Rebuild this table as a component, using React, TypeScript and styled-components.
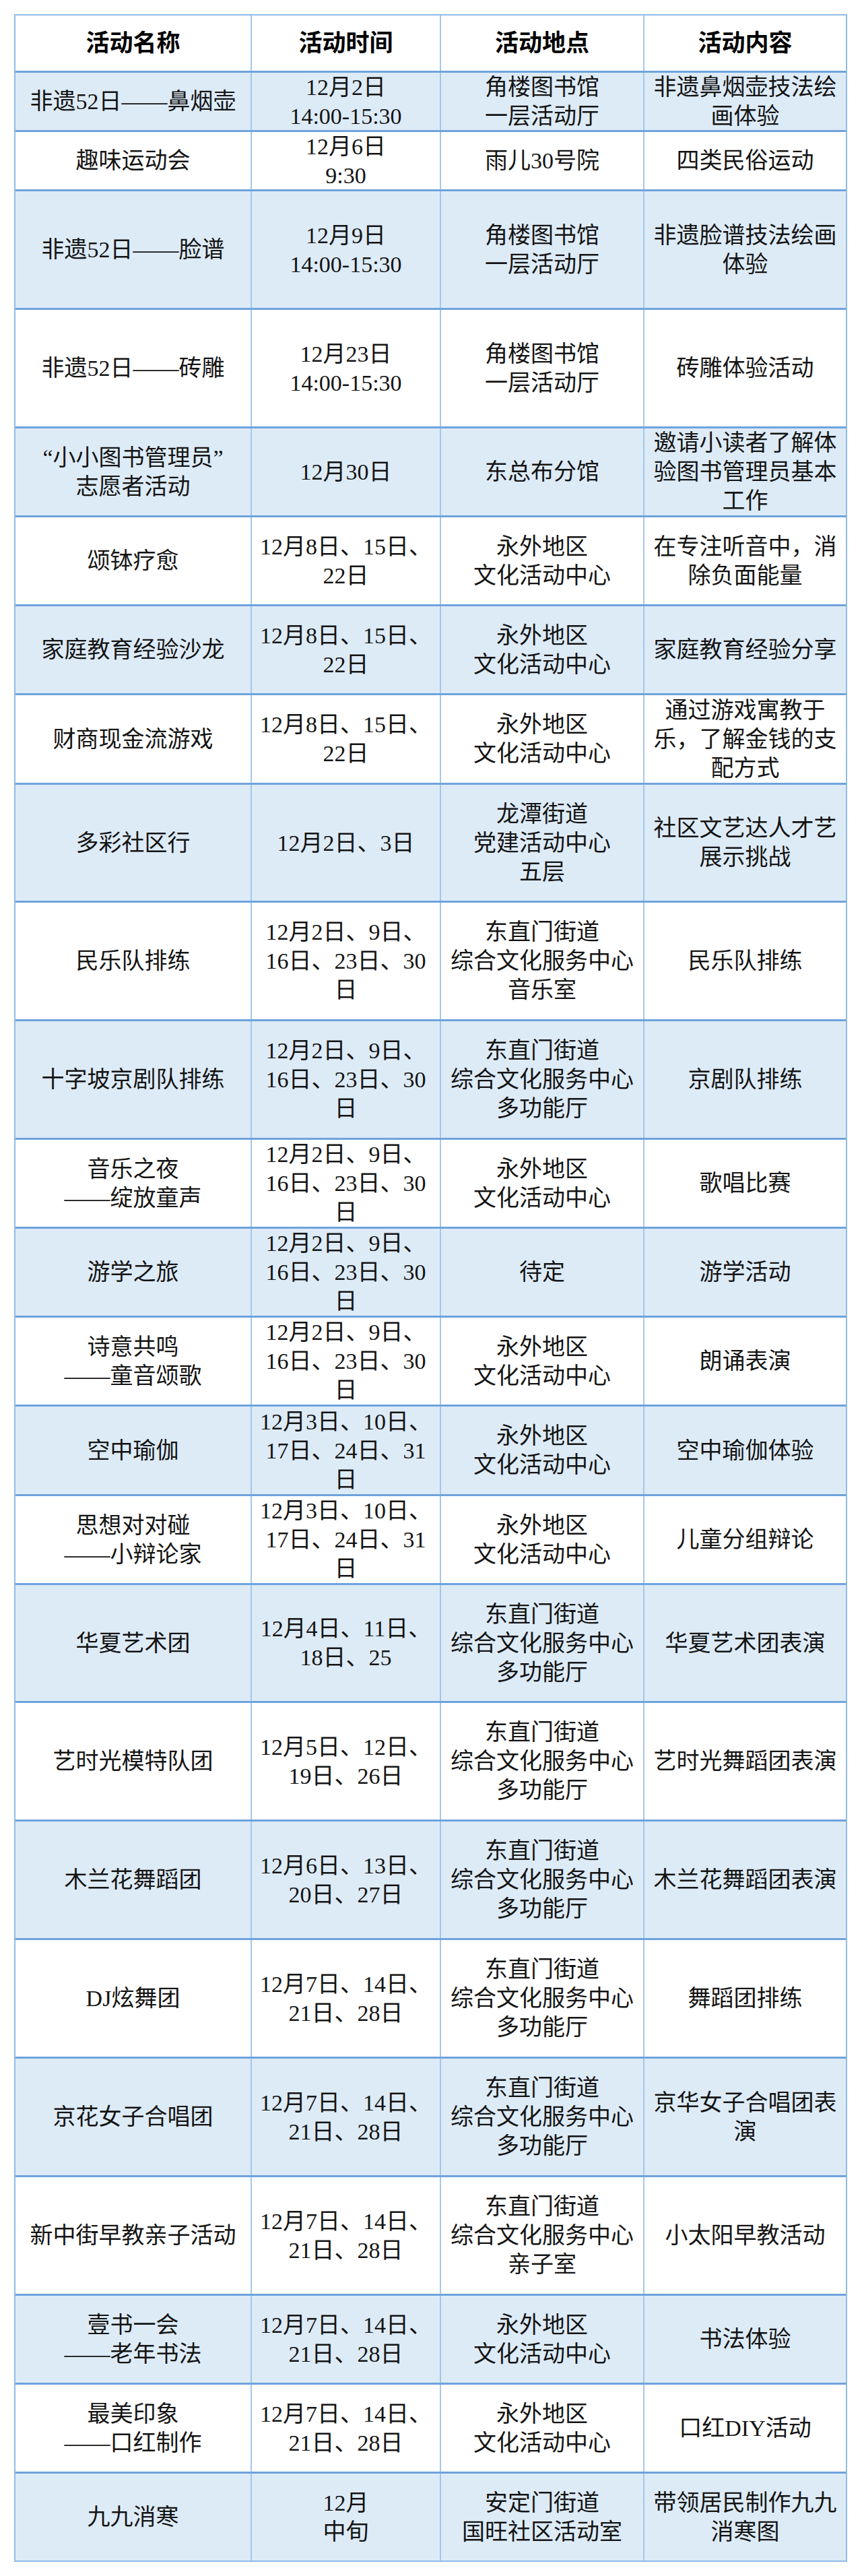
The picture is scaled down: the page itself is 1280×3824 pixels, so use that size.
import React from 'react';
import styled, { createGlobalStyle } from 'styled-components';

const GlobalStyle = createGlobalStyle`
  html, body {
    margin: 0;
    padding: 0;
    background: #ffffff;
  }
  body {
    font-family: "Liberation Serif", "Noto Sans CJK SC", serif;
    color: #111111;
  }
`;

const Page = styled.div`
  width: 1280px;
  min-height: 3824px;
  padding: 21px 0 0 21px;
  box-sizing: border-box;
  background: #ffffff;
`;

const Table = styled.div`
  width: 1237px;
  box-sizing: border-box;
  border: 2px solid #8fbbe8;
  display: flex;
  flex-direction: column;
`;

const Row = styled.div<{ $h: number; $shade?: boolean; $head?: boolean }>`
  display: grid;
  grid-template-columns: 351px 281px 302px 1fr;
  height: ${({ $h }) => $h}px;
  box-sizing: border-box;
  background: ${({ $shade }) => ($shade ? '#ddebf7' : '#ffffff')};
  border-top: ${({ $head }) => ($head ? 'none' : '3px solid #6ea3dc')};
`;

const Cell = styled.div<{ $last?: boolean }>`
  display: flex;
  flex-direction: column;
  align-items: center;
  justify-content: center;
  box-sizing: border-box;
  border-right: ${({ $last }) => ($last ? 'none' : '2px solid #a3c7ec')};
  overflow: hidden;
`;

const Line = styled.span`
  display: block;
  font-size: 34px;
  line-height: 43px;
  white-space: nowrap;
  color: #141414;
`;

const HeadText = styled.span`
  font-size: 35px;
  font-weight: 700;
  line-height: 43px;
  white-space: nowrap;
  color: #000000;
`;

type R = { h: number; c: string[][] };

const D1 = ['12月2日、9日、', '16日、23日、30', '日'];
const D2 = ['12月3日、10日、', '17日、24日、31', '日'];
const D7 = ['12月7日、14日、', '21日、28日'];
const YW = ['永外地区', '文化活动中心'];
const DZ = ['东直门街道', '综合文化服务中心', '多功能厅'];
const JL = ['角楼图书馆', '一层活动厅'];

const ROWS: R[] = [
  { h: 88, c: [['非遗52日——鼻烟壶'], ['12月2日', '14:00-15:30'], JL, ['非遗鼻烟壶技法绘', '画体验']] },
  { h: 88, c: [['趣味运动会'], ['12月6日', '9:30'], ['雨儿30号院'], ['四类民俗运动']] },
  { h: 176, c: [['非遗52日——脸谱'], ['12月9日', '14:00-15:30'], JL, ['非遗脸谱技法绘画', '体验']] },
  { h: 176, c: [['非遗52日——砖雕'], ['12月23日', '14:00-15:30'], JL, ['砖雕体验活动']] },
  { h: 132, c: [['“小小图书管理员”', '志愿者活动'], ['12月30日'], ['东总布分馆'], ['邀请小读者了解体', '验图书管理员基本', '工作']] },
  { h: 132, c: [['颂钵疗愈'], ['12月8日、15日、', '22日'], YW, ['在专注听音中，消', '除负面能量']] },
  { h: 132, c: [['家庭教育经验沙龙'], ['12月8日、15日、', '22日'], YW, ['家庭教育经验分享']] },
  { h: 133, c: [['财商现金流游戏'], ['12月8日、15日、', '22日'], YW, ['通过游戏寓教于', '乐，了解金钱的支', '配方式']] },
  { h: 175, c: [['多彩社区行'], ['12月2日、3日'], ['龙潭街道', '党建活动中心', '五层'], ['社区文艺达人才艺', '展示挑战']] },
  { h: 176, c: [['民乐队排练'], D1, ['东直门街道', '综合文化服务中心', '音乐室'], ['民乐队排练']] },
  { h: 176, c: [['十字坡京剧队排练'], D1, DZ, ['京剧队排练']] },
  { h: 132, c: [['音乐之夜', '——绽放童声'], D1, YW, ['歌唱比赛']] },
  { h: 132, c: [['游学之旅'], D1, ['待定'], ['游学活动']] },
  { h: 132, c: [['诗意共鸣', '——童音颂歌'], D1, YW, ['朗诵表演']] },
  { h: 133, c: [['空中瑜伽'], D2, YW, ['空中瑜伽体验']] },
  { h: 132, c: [['思想对对碰', '——小辩论家'], D2, YW, ['儿童分组辩论']] },
  { h: 175, c: [['华夏艺术团'], ['12月4日、11日、', '18日、25'], DZ, ['华夏艺术团表演']] },
  { h: 176, c: [['艺时光模特队团'], ['12月5日、12日、', '19日、26日'], DZ, ['艺时光舞蹈团表演']] },
  { h: 176, c: [['木兰花舞蹈团'], ['12月6日、13日、', '20日、27日'], DZ, ['木兰花舞蹈团表演']] },
  { h: 176, c: [['DJ炫舞团'], D7, DZ, ['舞蹈团排练']] },
  { h: 176, c: [['京花女子合唱团'], D7, DZ, ['京华女子合唱团表', '演']] },
  { h: 176, c: [['新中街早教亲子活动'], D7, ['东直门街道', '综合文化服务中心', '亲子室'], ['小太阳早教活动']] },
  { h: 132, c: [['壹书一会', '——老年书法'], D7, YW, ['书法体验']] },
  { h: 132, c: [['最美印象', '——口红制作'], D7, YW, ['口红DIY活动']] },
  { h: 132, c: [['九九消寒'], ['12月', '中旬'], ['安定门街道', '国旺社区活动室'], ['带领居民制作九九', '消寒图']] },
];

const HEAD = ['活动名称', '活动时间', '活动地点', '活动内容'];

export default function App() {
  return (
    <>
      <GlobalStyle />
      <Page>
        <Table>
          <Row $h={82} $head>
            {HEAD.map((t, i) => (
              <Cell key={t} $last={i === 3}>
                <HeadText>{t}</HeadText>
              </Cell>
            ))}
          </Row>
          {ROWS.map((r, ri) => (
            <Row key={ri} $h={r.h} $shade={ri % 2 === 0}>
              {r.c.map((lines, ci) => (
                <Cell key={ci} $last={ci === 3}>
                  {lines.map((l, li) => (
                    <Line key={li}>{l}</Line>
                  ))}
                </Cell>
              ))}
            </Row>
          ))}
        </Table>
      </Page>
    </>
  );
}
